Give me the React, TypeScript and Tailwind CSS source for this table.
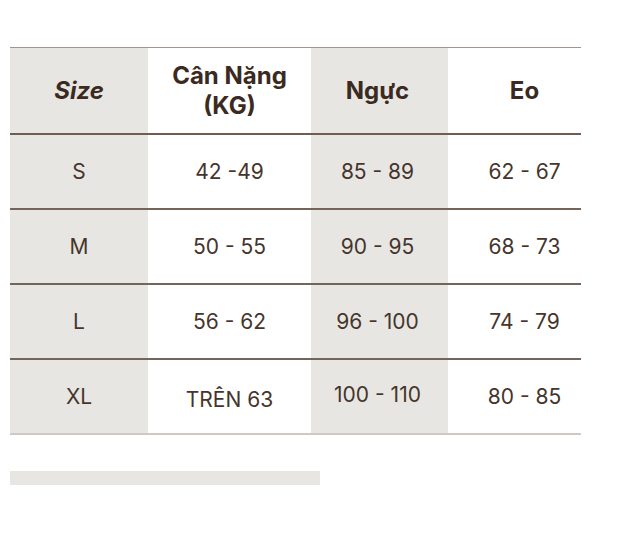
const ROWS = [
  ['S', '42 -49', '85 - 89', '62 - 67'],
  ['M', '50 - 55', '90 - 95', '68 - 73'],
  ['L', '56 - 62', '96 - 100', '74 - 79'],
  ['XL', 'TRÊN 63', '100 - 110', '80 - 85'],
];

export default function App() {
  return (
    <div className="min-h-[541px] bg-white pt-[47px] pl-[10px] text-[#45352c]" style={{ fontFamily: 'Inter, "Noto Sans", sans-serif' }}>
      <div className="w-[571px] border-t border-[#a0958e]">
        {/* header */}
        <div className="grid grid-cols-[138px_163px_137px_133px] h-[87px] border-b-2 border-[#6e5d53] text-[#3b2a21] font-bold text-[24px] leading-[30px]">
          <div className="bg-[#e8e6e3] flex items-center justify-center italic">Size</div>
          <div className="flex items-center justify-center text-center">Cân Nặng<br />(KG)</div>
          <div className="bg-[#e8e6e3] flex items-center justify-center pr-1">Ngực</div>
          <div className="flex items-center justify-center pl-5">Eo</div>
        </div>
        {ROWS.map((r, i) => {
          const last = i === ROWS.length - 1;
          return (
            <div
              key={r[0]}
              className={
                'grid grid-cols-[138px_163px_137px_133px] h-[75px] text-[21px] ' +
                (last ? 'border-b-2 border-[#cfc9c5]' : 'border-b-2 border-[#75645a]')
              }
            >
              <div className="bg-[#e8e6e3] flex items-center justify-center pt-px">{r[0]}</div>
              <div className={'flex items-center justify-center ' + (last ? 'pt-[6px]' : 'pt-px')}>{r[1]}</div>
              <div className={'bg-[#e8e6e3] flex items-center justify-center pr-1 ' + (last ? 'pb-[4px]' : 'pt-px')}>{r[2]}</div>
              <div className="flex items-center justify-center pl-5 pt-px">{r[3]}</div>
            </div>
          );
        })}
      </div>
      <div className="mt-[36px] w-[310px] h-[14px] bg-[#e8e6e3]" />
    </div>
  );
}
